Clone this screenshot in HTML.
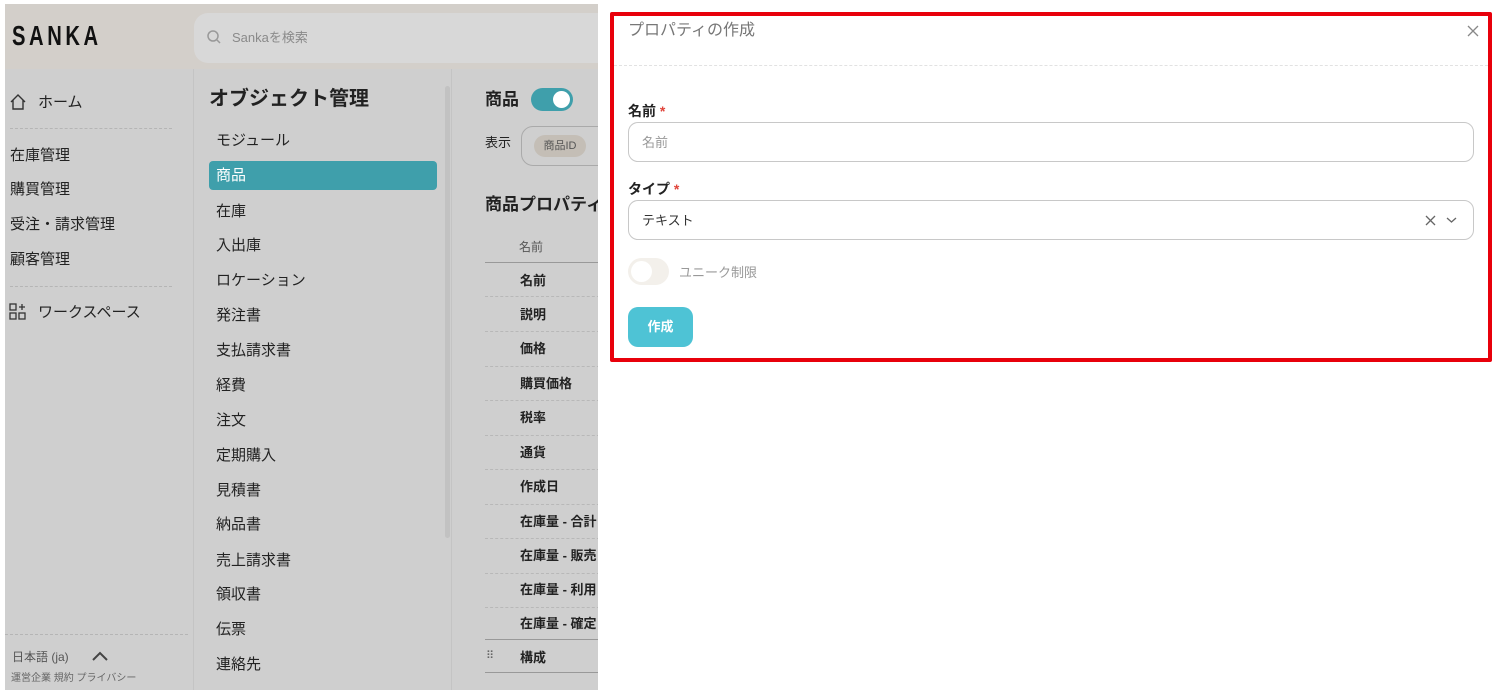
<!DOCTYPE html>
<html><head><meta charset="utf-8"><style>
*{margin:0;padding:0;box-sizing:border-box}
body{width:1500px;height:691px;background:#fff;position:relative;overflow:hidden;font-family:"Liberation Sans","Noto Sans CJK JP",sans-serif;color:#222;line-height:1}
.a{position:absolute}
#left{left:5px;top:4px;width:593px;height:686px;background:#cfcfcf;overflow:hidden}
#hdr{left:0;top:0;width:593px;height:65px;background:#d3cfca}
.logo{left:7px;top:18px;font-size:28px;font-weight:bold;letter-spacing:5px;color:#111;transform:scaleX(0.72);transform-origin:left top}
.search{left:189px;top:9px;width:420px;height:50px;background:#d8d8d8;border-radius:14px}
.search span{position:absolute;left:38px;top:18px;font-size:13px;color:#8a8a8a}
.t{font-size:15px;color:#222;white-space:nowrap}
.dash{border-top:1px dashed #b5b5b5}
#mid{left:188px;top:65px;width:1px;height:621px;background:#c4c4c4}
#mid2{left:446px;top:65px;width:1px;height:621px;background:#c4c4c4}
.sel{left:204px;top:157px;width:228px;height:29px;background:#3f9fab;border-radius:4px}
.row{left:480px;width:120px;border-top:1px dashed #b8b8b8}
.b{font-weight:bold;font-size:13px}
#modal{left:610px;top:12px;width:882px;height:350px;border:4px solid #e8000b;background:#fff;border-radius:2px}
.inp{left:14px;width:846px;height:40px;border:1px solid #c8c8c8;border-radius:10px}
</style></head><body>
<div id="left" class="a">
 <div id="hdr" class="a"></div>
 <div class="a logo">SANKA</div>
 <div class="a search"><svg class="a" style="left:12px;top:16px" width="16" height="16" viewBox="0 0 16 16"><circle cx="7" cy="7" r="5" fill="none" stroke="#999" stroke-width="1.5"/><path d="M11 11l3 3" stroke="#999" stroke-width="1.5"/></svg><span>Sankaを検索</span></div>
 <svg class="a" style="left:4px;top:89px" width="18" height="18" viewBox="0 0 18 18"><path d="M2 9L9 2l7 7M4 7v9h10V7" fill="none" stroke="#333" stroke-width="1.4"/></svg>
 <div class="a t" style="left:33px;top:91px">ホーム</div>
 <div class="a dash" style="left:5px;top:124px;width:162px"></div>
 <div class="a t" style="left:5px;top:144px">在庫管理</div>
 <div class="a t" style="left:5px;top:178px">購買管理</div>
 <div class="a t" style="left:5px;top:213px">受注・請求管理</div>
 <div class="a t" style="left:5px;top:248px">顧客管理</div>
 <div class="a dash" style="left:5px;top:282px;width:162px"></div>
 <svg class="a" style="left:4px;top:299px" width="20" height="18" viewBox="0 0 20 18"><rect x="1" y="1" width="6" height="6" fill="none" stroke="#333" stroke-width="1.3"/><rect x="1" y="10" width="6" height="6" fill="none" stroke="#333" stroke-width="1.3"/><rect x="10" y="10" width="6" height="6" fill="none" stroke="#333" stroke-width="1.3"/><path d="M13 1v6M10 4h6" stroke="#333" stroke-width="1.3"/></svg>
 <div class="a t" style="left:33px;top:301px">ワークスペース</div>
 <div class="a dash" style="left:0;top:630px;width:183px"></div>
 <div class="a" style="left:7px;top:647px;font-size:12px;color:#555">日本語 (ja)</div>
 <svg class="a" style="left:85px;top:646px" width="20" height="12" viewBox="0 0 20 12"><path d="M3 10l7-7 7 7" fill="none" stroke="#444" stroke-width="2"/></svg>
 <div class="a" style="left:6px;top:670px;font-size:10px;color:#666">運営企業 規約 プライバシー</div>
 <div id="mid" class="a"></div>
 <div class="a" style="left:204px;top:85px;font-size:20px;font-weight:bold">オブジェクト管理</div>
 <div class="a sel"></div>
 <div class="a" style="left:440px;top:82px;width:5px;height:452px;background:#c2c2c2;border-radius:3px"></div>
 <div class="a t" style="left:211px;top:129px">モジュール</div>
 <div class="a t" style="left:211px;top:164px;color:#fff">商品</div>
 <div class="a t" style="left:211px;top:200px">在庫</div>
 <div class="a t" style="left:211px;top:234px">入出庫</div>
 <div class="a t" style="left:211px;top:269px">ロケーション</div>
 <div class="a t" style="left:211px;top:304px">発注書</div>
 <div class="a t" style="left:211px;top:339px">支払請求書</div>
 <div class="a t" style="left:211px;top:374px">経費</div>
 <div class="a t" style="left:211px;top:409px">注文</div>
 <div class="a t" style="left:211px;top:444px">定期購入</div>
 <div class="a t" style="left:211px;top:479px">見積書</div>
 <div class="a t" style="left:211px;top:513px">納品書</div>
 <div class="a t" style="left:211px;top:549px">売上請求書</div>
 <div class="a t" style="left:211px;top:583px">領収書</div>
 <div class="a t" style="left:211px;top:618px">伝票</div>
 <div class="a t" style="left:211px;top:653px">連絡先</div>
 <div id="mid2" class="a"></div>
 <div class="a" style="left:480px;top:87px;font-size:17px;font-weight:bold">商品</div>
 <div class="a" style="left:526px;top:84px;width:42px;height:23px;background:#3f9fab;border-radius:12px"><div class="a" style="right:3px;top:3px;width:17px;height:17px;background:#fff;border-radius:50%"></div></div>
 <div class="a" style="left:480px;top:132px;font-size:13px">表示</div>
 <div class="a" style="left:516px;top:122px;width:90px;height:40px;border:1px solid #aaa;border-radius:12px"><div class="a" style="left:12px;top:8px;width:52px;height:22px;background:#c4beb6;border-radius:11px;font-size:11px;text-align:center;line-height:22px;color:#555">商品ID</div></div>
 <div class="a" style="left:480px;top:192px;font-size:17px;font-weight:bold;white-space:nowrap">商品プロパティ</div>
 <div class="a" style="left:514px;top:237px;font-size:12px;color:#555">名前</div>
 <div class="a" style="left:480px;top:258px;width:120px;border-top:1px solid #999"></div>
 <div class="a b" style="left:515px;top:270px">名前</div>
 <div class="a row" style="top:292px"></div>
 <div class="a b" style="left:515px;top:304px">説明</div>
 <div class="a row" style="top:327px"></div>
 <div class="a b" style="left:515px;top:338px">価格</div>
 <div class="a row" style="top:362px"></div>
 <div class="a b" style="left:515px;top:373px">購買価格</div>
 <div class="a row" style="top:396px"></div>
 <div class="a b" style="left:515px;top:407px">税率</div>
 <div class="a row" style="top:431px"></div>
 <div class="a b" style="left:515px;top:442px">通貨</div>
 <div class="a row" style="top:465px"></div>
 <div class="a b" style="left:515px;top:476px">作成日</div>
 <div class="a row" style="top:500px"></div>
 <div class="a b" style="left:515px;top:511px;white-space:nowrap">在庫量 - 合計</div>
 <div class="a row" style="top:534px"></div>
 <div class="a b" style="left:515px;top:545px;white-space:nowrap">在庫量 - 販売</div>
 <div class="a row" style="top:569px"></div>
 <div class="a b" style="left:515px;top:579px;white-space:nowrap">在庫量 - 利用</div>
 <div class="a row" style="top:603px"></div>
 <div class="a b" style="left:515px;top:613px;white-space:nowrap">在庫量 - 確定</div>
 <div class="a" style="left:480px;top:635px;width:120px;border-top:1px solid #999"></div>
 <div class="a" style="left:481px;top:647px;font-size:11px;color:#666">⠿</div>
 <div class="a b" style="left:515px;top:647px">構成</div>
 <div class="a" style="left:480px;top:668px;width:120px;border-top:1px solid #999"></div>
</div>
<div id="modal" class="a">
 <div class="a" style="left:14px;top:7px;font-size:16px;color:#777">プロパティの作成</div>
 <svg class="a" style="left:853px;top:9px" width="12" height="12" viewBox="0 0 12 12"><path d="M1 1l10 10M11 1L1 11" stroke="#888" stroke-width="1.3"/></svg>
 <div class="a" style="left:0;top:49px;width:874px;border-top:1px dashed #e2e2e2"></div>
 <div class="a" style="left:14px;top:88px;font-size:14px;font-weight:bold">名前 <span style="color:#e0443a">*</span></div>
 <div class="a inp" style="top:106px"><span class="a" style="left:13px;top:13px;font-size:13px;color:#999">名前</span></div>
 <div class="a" style="left:14px;top:166px;font-size:14px;font-weight:bold">タイプ <span style="color:#e0443a">*</span></div>
 <div class="a inp" style="top:184px"><span class="a" style="left:13px;top:13px;font-size:13px;color:#333">テキスト</span>
  <svg class="a" style="left:796px;top:14px" width="11" height="11" viewBox="0 0 11 11"><path d="M1 1l9 9M10 1l-9 9" stroke="#666" stroke-width="1.3"/></svg>
  <svg class="a" style="left:817px;top:15px" width="11" height="8" viewBox="0 0 11 8"><path d="M1 2l4.5 4L10 2" fill="none" stroke="#666" stroke-width="1.3"/></svg>
 </div>
 <div class="a" style="left:14px;top:242px;width:41px;height:27px;background:#f3f0eb;border-radius:14px"><div class="a" style="left:3px;top:3px;width:21px;height:21px;background:#fff;border-radius:50%"></div></div>
 <div class="a" style="left:65px;top:250px;font-size:13px;color:#999">ユニーク制限</div>
 <div class="a" style="left:14px;top:291px;width:65px;height:40px;background:#4ec3d5;border-radius:10px;color:#fff;font-size:13px;font-weight:bold;text-align:center;line-height:40px">作成</div>
</div>
</body></html>
